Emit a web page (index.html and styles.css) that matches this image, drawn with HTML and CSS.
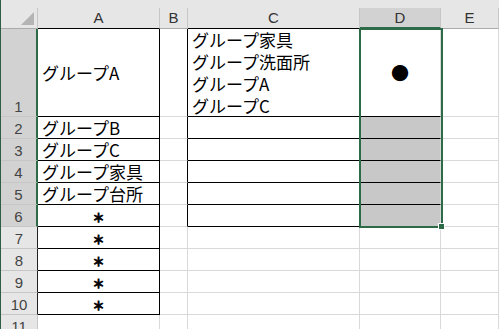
FILE: index.html
```html
<!DOCTYPE html>
<html lang="ja">
<head>
    <meta charset="UTF-8">
    <title>Sheet1</title>
    <link rel="stylesheet" href="styles.css">
</head>
<body>
    <div class="sheet">
        <!-- top strip under the formula bar -->
        <div class="strip"></div>

        <!-- column headers -->
        <div class="corner"><span class="tri"></span></div>
        <div class="col-head edge">A</div>
        <div class="col-head">B</div>
        <div class="col-head edge">C</div>
        <div class="col-head sel">D</div>
        <div class="col-head">E</div>

        <!-- row 1 -->
        <div class="row-head sel tall">1</div>
        <div class="cell a mid">グループA</div>
        <div class="cell b"></div>
        <div class="cell c list">グループ家具<br>グループ洗面所<br>グループA<br>グループC</div>
        <div class="cell d mid center"><span class="dot">●</span></div>
        <div class="cell"></div>

        <div class="row-head sel">2</div>
        <div class="cell a">グループB</div>
        <div class="cell b"></div>
        <div class="cell c"></div>
        <div class="cell d fill"></div>
        <div class="cell"></div>

        <div class="row-head sel">3</div>
        <div class="cell a">グループC</div>
        <div class="cell b"></div>
        <div class="cell c"></div>
        <div class="cell d fill"></div>
        <div class="cell"></div>

        <div class="row-head sel">4</div>
        <div class="cell a">グループ家具</div>
        <div class="cell b"></div>
        <div class="cell c"></div>
        <div class="cell d fill"></div>
        <div class="cell"></div>

        <div class="row-head sel">5</div>
        <div class="cell a">グループ台所</div>
        <div class="cell b"></div>
        <div class="cell c"></div>
        <div class="cell d fill"></div>
        <div class="cell"></div>

        <div class="row-head sel">6</div>
        <div class="cell a center star">＊</div>
        <div class="cell b"></div>
        <div class="cell c"></div>
        <div class="cell d fill"></div>
        <div class="cell"></div>

        <div class="row-head boxed">7</div>
        <div class="cell a center star">＊</div>
        <div class="cell"></div>
        <div class="cell"></div>
        <div class="cell"></div>
        <div class="cell"></div>

        <div class="row-head boxed">8</div>
        <div class="cell a center star">＊</div>
        <div class="cell"></div>
        <div class="cell"></div>
        <div class="cell"></div>
        <div class="cell"></div>

        <div class="row-head boxed">9</div>
        <div class="cell a center star">＊</div>
        <div class="cell"></div>
        <div class="cell"></div>
        <div class="cell"></div>
        <div class="cell"></div>

        <div class="row-head boxed">10</div>
        <div class="cell a center star">＊</div>
        <div class="cell"></div>
        <div class="cell"></div>
        <div class="cell"></div>
        <div class="cell"></div>

        <div class="row-head">11</div>
        <div class="cell"></div>
        <div class="cell"></div>
        <div class="cell"></div>
        <div class="cell"></div>
        <div class="cell"></div>

        <!-- selection frame over D1:D6 -->
        <div class="selection"></div>
        <div class="handle"></div>
    </div>
</body>
</html>
```

FILE: styles.css
```css
* {
    box-sizing: border-box;
    margin: 0;
    padding: 0;
}

body {
    background-color: #fff;
    overflow: hidden;
    font-family: 'Noto Sans CJK JP', sans-serif;
}

.sheet {
    position: relative;
    display: grid;
    grid-template-columns: 37px 122px 28px 172px 81px 1fr;
    grid-template-rows: 8px 21px 88px repeat(10, 22px);
    border-left: 1px solid #2e5e46;
    width: 499px;
    height: 329px;
    overflow: hidden;
}

.strip {
    grid-column: 1 / -1;
    background-color: #e6e6e6;
}

/* Headers */
.corner {
    position: relative;
    background-color: #e6e6e6;
    border-right: 1px solid #c6c6c6;
    border-bottom: 1px solid #ababab;
}

.tri {
    position: absolute;
    right: 3px;
    bottom: 3px;
    width: 0;
    height: 0;
    border-left: 13px solid transparent;
    border-bottom: 13px solid #b4b4b4;
}

.col-head {
    background-color: #e6e6e6;
    border-right: 1px solid #c6c6c6;
    border-bottom: 1px solid #ababab;
    font-family: 'Liberation Sans', sans-serif;
    font-size: 15px;
    color: #333;
    text-align: center;
    line-height: 20px;
}

.col-head.edge {
    border-bottom-color: #000;
}

.col-head.sel {
    background-color: #d2d2d2;
    border-bottom: 2px solid #2d6a48;
}

.row-head {
    background-color: #e6e6e6;
    border-right: 1px solid #c6c6c6;
    border-bottom: 1px solid #c6c6c6;
    font-family: 'Liberation Sans', sans-serif;
    font-size: 15px;
    color: #444;
    text-align: center;
    display: flex;
    align-items: flex-end;
    justify-content: center;
    padding-bottom: 1px;
}

.row-head.sel {
    background-color: #d2d2d2;
    border-right: 2px solid #2d6a48;
}

.row-head.boxed {
    border-right-color: #222;
}

/* Cells */
.cell {
    border-right: 1px solid #d9d9d9;
    border-bottom: 1px solid #d9d9d9;
    font-size: 17px;
    line-height: 21px;
    color: #000;
    padding-left: 4px;
    white-space: nowrap;
    display: flex;
    align-items: flex-end;
}

.cell.a {
    border-right-color: #000;
    border-bottom-color: #000;
}

.cell.b {
    border-right-color: #000;
}

.cell.c {
    border-right-color: #000;
    border-bottom-color: #000;
}

.cell.d {
    border-bottom-color: #000;
}

.cell.fill {
    background-color: #c8c8c8;
}

.cell.mid {
    align-items: center;
}

.cell.center {
    justify-content: center;
    padding-left: 0;
}

.cell.list {
    display: block;
    line-height: 22px;
}

.star {
    font-size: 12px;
    font-weight: bold;
    -webkit-text-stroke: 0.8px #000;
    align-items: center;
    padding-top: 3px;
}

.dot {
    font-size: 18px;
}

/* Active selection */
.selection {
    position: absolute;
    left: 358px;
    top: 28px;
    width: 84px;
    height: 200px;
    border: 2px solid #2d6a48;
}

.handle {
    position: absolute;
    left: 437px;
    top: 223px;
    width: 7px;
    height: 7px;
    background-color: #2d6a48;
    border: 1px solid #fff;
}
```
